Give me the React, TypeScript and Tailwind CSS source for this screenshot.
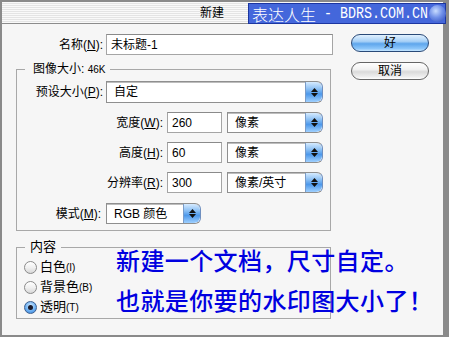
import React from "react";

const SANS = "font-['Liberation_Sans','Noto_Sans_CJK_SC',sans-serif]";

function Arrows() {
  return (
    <div className="w-[17px] h-full rounded-r-[6px] border-l border-[#7a9cc8] bg-[linear-gradient(180deg,#d6ebff_0%,#8cc0f4_35%,#4d98ea_60%,#9fd0ff_100%)] flex flex-col items-center justify-center gap-[1px]">
      <svg width="7" height="4" viewBox="0 0 7 4"><polygon points="3.5,0 7,4 0,4" fill="#111" /></svg>
      <svg width="7" height="4" viewBox="0 0 7 4"><polygon points="0,0 7,0 3.5,4" fill="#111" /></svg>
    </div>
  );
}

function Select({ w, h, text }: { w: string; h: string; text: string }) {
  return (
    <div className={`${w} ${h} flex bg-white border border-[#8f8f8f] border-r-[#6f8fbf] rounded-r-[6px] shadow-[inset_0_1px_0_#bdbdbd]`}>
      <div className="flex-1 flex items-center pl-[7px] text-[12px] text-black">{text}</div>
      <Arrows />
    </div>
  );
}

function Input({ w, h, text, pad = "pl-[4px]" }: { w: string; h: string; text: string; pad?: string }) {
  return (
    <div className={`${w} ${h} bg-white border border-[#a5a5a5] border-t-[#8a8a8a] flex items-center ${pad} text-[12px] text-black`}>
      {text}
    </div>
  );
}

function Radio({ on }: { on?: boolean }) {
  return on ? (
    <div className="w-[13px] h-[13px] rounded-full border border-[#3d5f8f] bg-[radial-gradient(circle_at_50%_35%,#d4ecff_0%,#6fb1f2_55%,#2f7fd8_100%)] flex items-center justify-center">
      <div className="w-[5px] h-[5px] rounded-full bg-[#1a1a2a]" />
    </div>
  ) : (
    <div className="w-[13px] h-[13px] rounded-full border border-[#8a8a8a] bg-[linear-gradient(180deg,#ffffff_0%,#f0f0f0_50%,#d8d8d8_100%)]" />
  );
}

export default function App() {
  return (
    <div className={`relative w-[449px] h-[337px] bg-[#8a8a8a] pt-[2px] pl-[2px] pr-[6px] pb-[2px] overflow-hidden ${SANS}`}>
      <div className="w-[441px] h-[333px] flex flex-col bg-[#f6f6f6]">
        {/* title bar */}
        <div className="h-[22px] border-b border-[#8c8c8c] bg-[repeating-linear-gradient(180deg,#f9f9f9_0px,#f9f9f9_1px,#e4e4e4_1px,#e4e4e4_2px)] flex items-center justify-center pr-[21px]">
          <span className="text-[12px] text-black">新建</span>
        </div>
        {/* body */}
        <div className="flex pl-[14px]">
          <div className="w-[317px] flex flex-col">
            <div className="mt-[10px] flex items-center gap-[3px]">
              <div className="w-[87px] text-right text-[12px] text-black">名称(<u>N</u>):</div>
              <Input w="w-[227px]" h="h-[21px]" text="未标题-1" />
            </div>

            <fieldset className="mt-[7px] w-[315px] border border-[#a8a8a8] px-[6px] pt-[4px] pb-[6px]">
              <legend className="ml-[2px] px-[8px] pr-[5px] text-[12px] leading-[14px] text-black">
                图像大小: <span className="text-[10px]">46K</span>
              </legend>
              <div className="flex items-center gap-[3px]">
                <div className="w-[80px] text-right text-[12px] text-black">预设大小(<u>P</u>):</div>
                <Select w="w-[217px]" h="h-[22px]" text="自定" />
              </div>
              <div className="mt-[9px] flex items-center">
                <div className="w-[140px] text-right text-[12px] text-black">宽度(<u>W</u>):</div>
                <div className="ml-[4px]"><Input w="w-[55px]" h="h-[21px]" text="260" /></div>
                <div className="ml-[5px]"><Select w="w-[96px]" h="h-[21px]" text="像素" /></div>
              </div>
              <div className="mt-[9px] flex items-center">
                <div className="w-[140px] text-right text-[12px] text-black">高度(<u>H</u>):</div>
                <div className="ml-[4px]"><Input w="w-[55px]" h="h-[21px]" text="60" /></div>
                <div className="ml-[5px]"><Select w="w-[96px]" h="h-[21px]" text="像素" /></div>
              </div>
              <div className="mt-[9px] flex items-center">
                <div className="w-[140px] text-right text-[12px] text-black">分辨率(<u>R</u>):</div>
                <div className="ml-[4px]"><Input w="w-[55px]" h="h-[21px]" text="300" /></div>
                <div className="ml-[5px]"><Select w="w-[96px]" h="h-[21px]" text="像素/英寸" /></div>
              </div>
              <div className="mt-[10px] flex items-center">
                <div className="w-[78px] text-right text-[12px] text-black">模式(<u>M</u>):</div>
                <div className="ml-[5px]"><Select w="w-[95px]" h="h-[21px]" text="RGB 颜色" /></div>
              </div>
            </fieldset>

            <fieldset className="mt-[8px] w-[315px] border border-[#a8a8a8] px-[6px] pt-[2px] pb-[1px]">
              <legend className="ml-[2px] px-[5px] text-[13px] leading-[16px] text-black">内容</legend>
              <div className="h-[20px] flex items-center pl-[1px] gap-[3px]">
                <Radio />
                <span className="text-[13px] text-black">白色<span className="text-[10px]">(I)</span></span>
              </div>
              <div className="h-[20px] flex items-center pl-[1px] gap-[3px]">
                <Radio />
                <span className="text-[13px] text-black">背景色<span className="text-[10px]">(B)</span></span>
              </div>
              <div className="h-[20px] flex items-center pl-[1px] gap-[3px]">
                <Radio on />
                <span className="text-[13px] text-black">透明<span className="text-[10px]">(T)</span></span>
              </div>
            </fieldset>
          </div>

          <div className="ml-[18px] mt-[10px] flex flex-col gap-[10px]">
            <div className="w-[78px] h-[18px] rounded-full border border-[#2a4a78] bg-[linear-gradient(180deg,#e2f1ff_0%,#a6d0f6_40%,#5ea6ec_55%,#8cc6fa_85%,#c6e6ff_100%)] flex items-center justify-center text-[12px] text-black">
              好
            </div>
            <div className="w-[78px] h-[18px] rounded-full border border-[#666] bg-[linear-gradient(180deg,#ffffff_0%,#f2f2f2_40%,#dadada_55%,#eeeeee_85%,#ffffff_100%)] flex items-center justify-center text-[12px] text-black">
              取消
            </div>
          </div>
        </div>
      </div>

      {/* watermark overlay */}
      <div className="absolute left-[248px] top-[3px] w-[198px] h-[21px] bg-[#4467db] border border-[#1c36a0] flex items-center pl-[3px] text-white whitespace-nowrap">
        <span className="shrink-0 text-[16px] leading-none font-['Noto_Sans_CJK_SC',sans-serif] font-light">表达人生</span>
        <span className="shrink-0 inline-block origin-left scale-x-[0.833] text-[16px] leading-none font-['Liberation_Mono',monospace] whitespace-pre"> - BDRS.COM.CN</span>
        <div className="absolute left-[180px] top-[1px] w-[17px] h-[17px] rounded-full bg-[radial-gradient(circle_at_40%_35%,#c8dcff_0%,#6f8fe8_45%,#2a48b8_100%)]" />
      </div>

      {/* blue annotation overlay */}
      <div className="absolute left-[116px] top-[240px] text-[24px] leading-[40px] tracking-[0.4px] text-[#0000e0] font-medium font-['Noto_Sans_CJK_SC',sans-serif] whitespace-nowrap">
        <div>新建一个文档，尺寸自定。</div>
        <div>也就是你要的水印图大小了！</div>
      </div>
    </div>
  );
}
